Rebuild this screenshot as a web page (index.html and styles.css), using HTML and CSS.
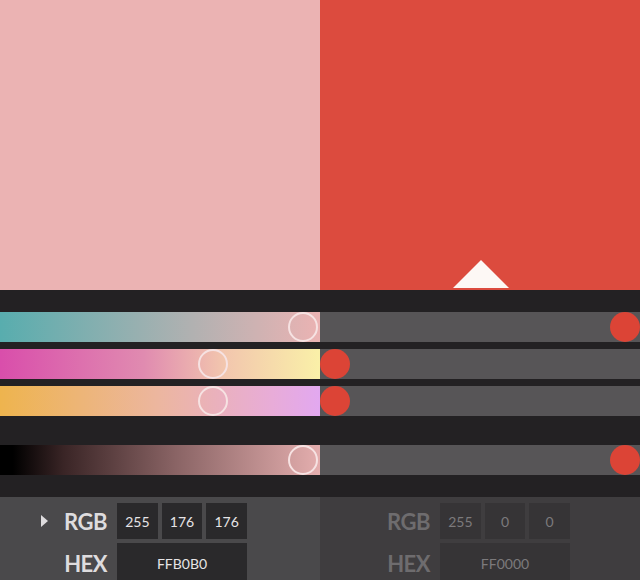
FILE: index.html
```html
<!DOCTYPE html>
<html lang="en">
<head>
    <meta charset="UTF-8">
    <meta name="viewport" content="width=device-width, initial-scale=1.0">
    <title>Color Compare</title>
    <link rel="stylesheet" href="styles.css">
</head>
<body>

    <div class="picker">
        <!-- current / target swatches -->
        <div class="swatches">
            <div class="swatch swatch-current"></div>
            <div class="swatch swatch-target">
                <span class="marker"></span>
            </div>
        </div>

        <!-- channel sliders -->
        <div class="sliders">
            <div class="slider-row">
                <div class="track track-r"><span class="handle" style="left: 303px"></span></div>
                <div class="track track-off"><span class="dot" style="left: 305px"></span></div>
            </div>
            <div class="slider-row">
                <div class="track track-g"><span class="handle" style="left: 213px"></span></div>
                <div class="track track-off"><span class="dot" style="left: 15px"></span></div>
            </div>
            <div class="slider-row">
                <div class="track track-b"><span class="handle" style="left: 213px"></span></div>
                <div class="track track-off"><span class="dot" style="left: 15px"></span></div>
            </div>
            <div class="slider-row slider-light">
                <div class="track track-l"><span class="handle" style="left: 303px"></span></div>
                <div class="track track-off"><span class="dot" style="left: 305px"></span></div>
            </div>
        </div>

        <!-- value readouts -->
        <div class="values">
            <div class="panel">
                <div class="label"><span class="caret"></span>RGB</div>
                <div class="fields">
                    <div class="field">255</div>
                    <div class="field">176</div>
                    <div class="field">176</div>
                </div>
                <div class="label">HEX</div>
                <div class="field field-wide">FFB0B0</div>
            </div>
            <div class="panel panel-dim">
                <div class="label">RGB</div>
                <div class="fields">
                    <div class="field">255</div>
                    <div class="field">0</div>
                    <div class="field">0</div>
                </div>
                <div class="label">HEX</div>
                <div class="field field-wide">FF0000</div>
            </div>
        </div>
    </div>

</body>
</html>
```

FILE: styles.css
```css
body {
    margin: 0;
    background-color: #232123;
    font-family: Lato, "Open Sans", sans-serif;
    overflow: hidden;
}
.picker {
    width: 640px;
    height: 580px;
    background-color: #232123;
}
.swatches {
    display: grid;
    grid-template-columns: 320px 320px;
    height: 290px;
}
.swatch-current {
    background-color: #ebb3b3;
}
.swatch-target {
    background-color: #dc4b3e;
    position: relative;
}
.marker {
    position: absolute;
    left: 133px;
    bottom: 2px;
    width: 0;
    height: 0;
    border-left: 28px solid transparent;
    border-right: 28px solid transparent;
    border-bottom: 28px solid #fdf8f5;
}
.sliders {
    padding: 22px 0 22px;
    display: flex;
    flex-direction: column;
    gap: 7px;
}
.slider-light {
    margin-top: 22px;
}
.slider-row {
    display: grid;
    grid-template-columns: 320px 320px;
    height: 30px;
}
.track {
    position: relative;
    height: 30px;
}
.track-r {
    background: linear-gradient(to right, #58adae, #b1b1b1 60%, #ebb3b3);
}
.track-g {
    background: linear-gradient(to right, #d94eab, #e08bb0 45%, #f2c6ae 70%, #faf0a8);
}
.track-b {
    background: linear-gradient(to right, #eeb44e, #ecb6a0 50%, #e8acd8 85%, #e2a8f0);
}
.track-l {
    background: linear-gradient(to right, #000000 4%, #3a2526 20%, #8a6465 55%, #e4aeae);
}
.track-off {
    background-color: #575557;
}
.handle {
    position: absolute;
    top: 0;
    width: 26px;
    height: 26px;
    margin-left: -15px;
    border: 2px solid #f6e2e2;
    border-radius: 50%;
    box-sizing: content-box;
}
.dot {
    position: absolute;
    top: 0;
    width: 30px;
    height: 30px;
    margin-left: -15px;
    border-radius: 50%;
    background-color: #dc4436;
}
.values {
    display: grid;
    grid-template-columns: 320px 320px;
    height: 83px;
}
.panel {
    display: grid;
    grid-template-columns: 107px 130px;
    grid-template-rows: 36px 40px;
    column-gap: 10px;
    row-gap: 4px;
    padding-top: 6px;
    background-color: #4a494b;
    color: #dedcde;
}
.panel-dim {
    grid-template-columns: 110px 130px;
    background-color: #3f3d3f;
    color: #6e6c6e;
}
.label {
    display: flex;
    align-items: center;
    justify-content: flex-end;
    font-size: 22px;
    font-weight: 700;
    letter-spacing: -0.5px;
}
.caret {
    width: 0;
    height: 0;
    margin-right: 16px;
    border-top: 6px solid transparent;
    border-bottom: 6px solid transparent;
    border-left: 7px solid #dedcde;
}
.fields {
    display: grid;
    grid-template-columns: repeat(3, 1fr);
    gap: 4px;
}
.field {
    display: flex;
    align-items: center;
    justify-content: center;
    background-color: #2a292b;
    color: #e6e4e6;
    font-size: 14px;
    font-weight: 400;
}
.panel-dim .field {
    background-color: #363436;
    color: #7c7a7c;
}
```
